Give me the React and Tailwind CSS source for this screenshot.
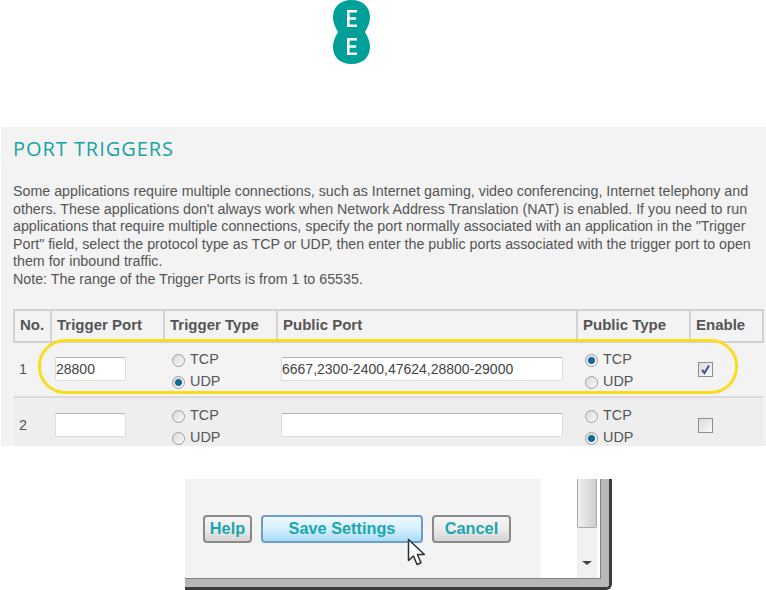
import React from 'react';

const Radio = ({ on, label }) => (
  <label className="flex items-center gap-[5px] h-[22px] text-[14.4px] text-[#555]">
    <span className="w-[13px] h-[13px] rounded-full border border-[#a0a0a0] bg-gradient-to-br from-[#d8d8d8] to-[#fafafa] flex items-center justify-center">
      {on && <span className="w-[7px] h-[7px] rounded-full bg-[#0b6fa4] border border-[#0a4f78]" />}
    </span>
    {label}
  </label>
);

const Input = ({ value, width }) => (
  <div className={`${width} h-[24px] bg-white border border-[#dcdcdc] border-t-[#b4b4b4] rounded-[2px] leading-[22px] text-[14px] text-[#444]`}>{value}</div>
);

const Check = ({ on }) => (
  <span className="flex items-center justify-center w-[15px] h-[15px] border border-[#8e8f8f] bg-gradient-to-br from-[#dcdcdc] to-[#f8f8f8] ml-[8px]">
    {on && (
      <svg width="11" height="11" viewBox="0 0 11 11" fill="none">
        <path d="M2 6l2.5 3L9 1.5" stroke="#3f4f9e" strokeWidth="2" />
      </svg>
    )}
  </span>
);

const Row = ({ no, bg, port, trigger, pub, pubType, on }) => (
  <tr className={bg}>
    <td className="pl-[5px] pt-[2px] text-[14.4px] text-[#555]">{no}</td>
    <td className="pl-[4px]"><Input value={port} width="w-[71px]" /></td>
    <td className="pl-[8px] pt-[4px]">
      <Radio on={trigger === 'TCP'} label="TCP" />
      <Radio on={trigger === 'UDP'} label="UDP" />
    </td>
    <td className="pl-[4px]"><Input value={pub} width="w-[282px]" /></td>
    <td className="pl-[8px] pt-[4px]">
      <Radio on={pubType === 'TCP'} label="TCP" />
      <Radio on={pubType === 'UDP'} label="UDP" />
    </td>
    <td><Check on={on} /></td>
  </tr>
);

const Button = ({ children, width, blue }) => (
  <button className={`${width} h-[28px] rounded-[4px] border-2 pb-[2px] text-[16.3px] font-bold text-[#1ba6ae] leading-none ${blue ? 'border-[#6d9ec9] bg-gradient-to-b from-[#eef8fe] via-[#d6effc] to-[#a9dcf6]' : 'border-[#8a8a8a] bg-gradient-to-b from-[#f6f6f6] via-[#ececec] to-[#d4d4d4]'}`}>
    {children}
  </button>
);

const headers = ['No.', 'Trigger Port', 'Trigger Type', 'Public Port', 'Public Type', 'Enable'];
const widths = ['w-[37px]', 'w-[113px]', 'w-[113px]', 'w-[300px]', 'w-[113px]', 'w-[73px]'];

export default function App() {
  return (
    <div className="w-[766px] h-[590px] overflow-hidden bg-white relative font-['Liberation_Sans',Arial,sans-serif]">
      <div className="h-[127px] pl-[333px]">
        <svg width="37" height="64" viewBox="0 0 37 64">
          <path d="M18.5 0C31 0 37 8 37 17C37 24 33.5 29 32 32C33.5 35 37 40 37 47C37 56 31 64 18.5 64C6 64 0 56 0 47C0 40 3.5 35 5 32C3.5 29 0 24 0 17C0 8 6 0 18.5 0Z" fill="#009f9a" />
          <path d="M14 10h10v2.5h-7.4v4.7h6.6v2.5h-6.6v4.8h7.4V27H14zM14 38h10v2.5h-7.4v4.7h6.6v2.5h-6.6v4.8h7.4V55H14z" fill="#fff" />
        </svg>
      </div>

      <div className="ml-[1px] h-[319px] bg-[#f3f3f3] overflow-hidden pl-[12px] pr-[3px] relative">
        <h1 className="mt-[13px] h-[18px] text-[20px] leading-[18px] tracking-[0.95px] text-[#16a3a3] font-['Open_Sans',sans-serif]">PORT TRIGGERS</h1>
        <p className="mt-[25px] text-[14.25px] leading-[17.6px] text-[#555] whitespace-nowrap">
          Some applications require multiple connections, such as Internet gaming, video conferencing, Internet telephony and<br />
          others. These applications don't always work when Network Address Translation (NAT) is enabled. If you need to run<br />
          applications that require multiple connections, specify the port normally associated with an application in the "Trigger<br />
          Port" field, select the protocol type as TCP or UDP, then enter the public ports associated with the trigger port to open<br />
          them for inbound traffic.<br />
          Note: The range of the Trigger Ports is from 1 to 65535.
        </p>

        <table className="mt-[20px] w-[749px] table-fixed border-collapse">
          <thead>
            <tr>
              {headers.map((h, i) => (
                <th key={h} className={`${widths[i]} h-[32px] border-2 border-[#d2d2d2] pl-[5px] text-left text-[15px] font-bold text-[#555]`}>{h}</th>
              ))}
            </tr>
          </thead>
          <tbody>
            <Row no="1" bg="h-[55px] bg-[#f3f3f3]" port="28800" trigger="UDP" pub="6667,2300-2400,47624,28800-29000" pubType="TCP" on />
            <Row no="2" bg="h-[56px] bg-[#eeeeee] border-t-2 border-[#dcdcdc]" port="" trigger="none" pub="" pubType="UDP" />
          </tbody>
        </table>

        {/* yellow highlight round the first row */}
        <div className="absolute left-[37px] top-[212px] w-[700px] h-[55px] rounded-[27px] border-[3px] border-[#f9dc1c]" />
      </div>

      <div className="ml-[185px] mt-[33px] w-[427px] h-[111px] relative border-r-[3px] border-b-[3px] border-[#3c3c3c] rounded-br-[6px]">
        <div className="h-full border-r-[8px] border-b-[8px] border-[#b8b8b8] rounded-br-[4px]">
          <div className="h-full border-r border-b border-[#808080] flex">
            <div className="w-[356px] bg-[#f3f3f3] flex gap-[9px] pl-[18px] pt-[36px]">
              <Button width="w-[49px]">Help</Button>
              <Button width="w-[162px]" blue>Save Settings</Button>
              <Button width="w-[79px]">Cancel</Button>
            </div>
            <div className="w-[36px] bg-white" />
            <div className="w-[20px] bg-[#f1f1f1] flex flex-col items-center">
              <div className="w-full h-[49px] rounded-b-[2px] border border-t-0 border-[#a9a9a9] bg-gradient-to-r from-[#f0f0f0] to-[#cfcfcf]" />
              <span className="mt-[33px] w-0 h-0 border-x-[5px] border-x-transparent border-t-[4px] border-t-[#444]" />
            </div>
            <div className="w-[3px] bg-white" />
          </div>
        </div>

        <svg className="absolute left-[222px] top-[59px]" width="20" height="30" viewBox="0 0 20 30">
          <path d="M1.5 1.5v21l5-4.5 3.5 8.5 4-1.8-3.6-8.2h7z" fill="#fff" stroke="#26303d" strokeWidth="1.5" strokeLinejoin="round" />
        </svg>
      </div>
    </div>
  );
}
